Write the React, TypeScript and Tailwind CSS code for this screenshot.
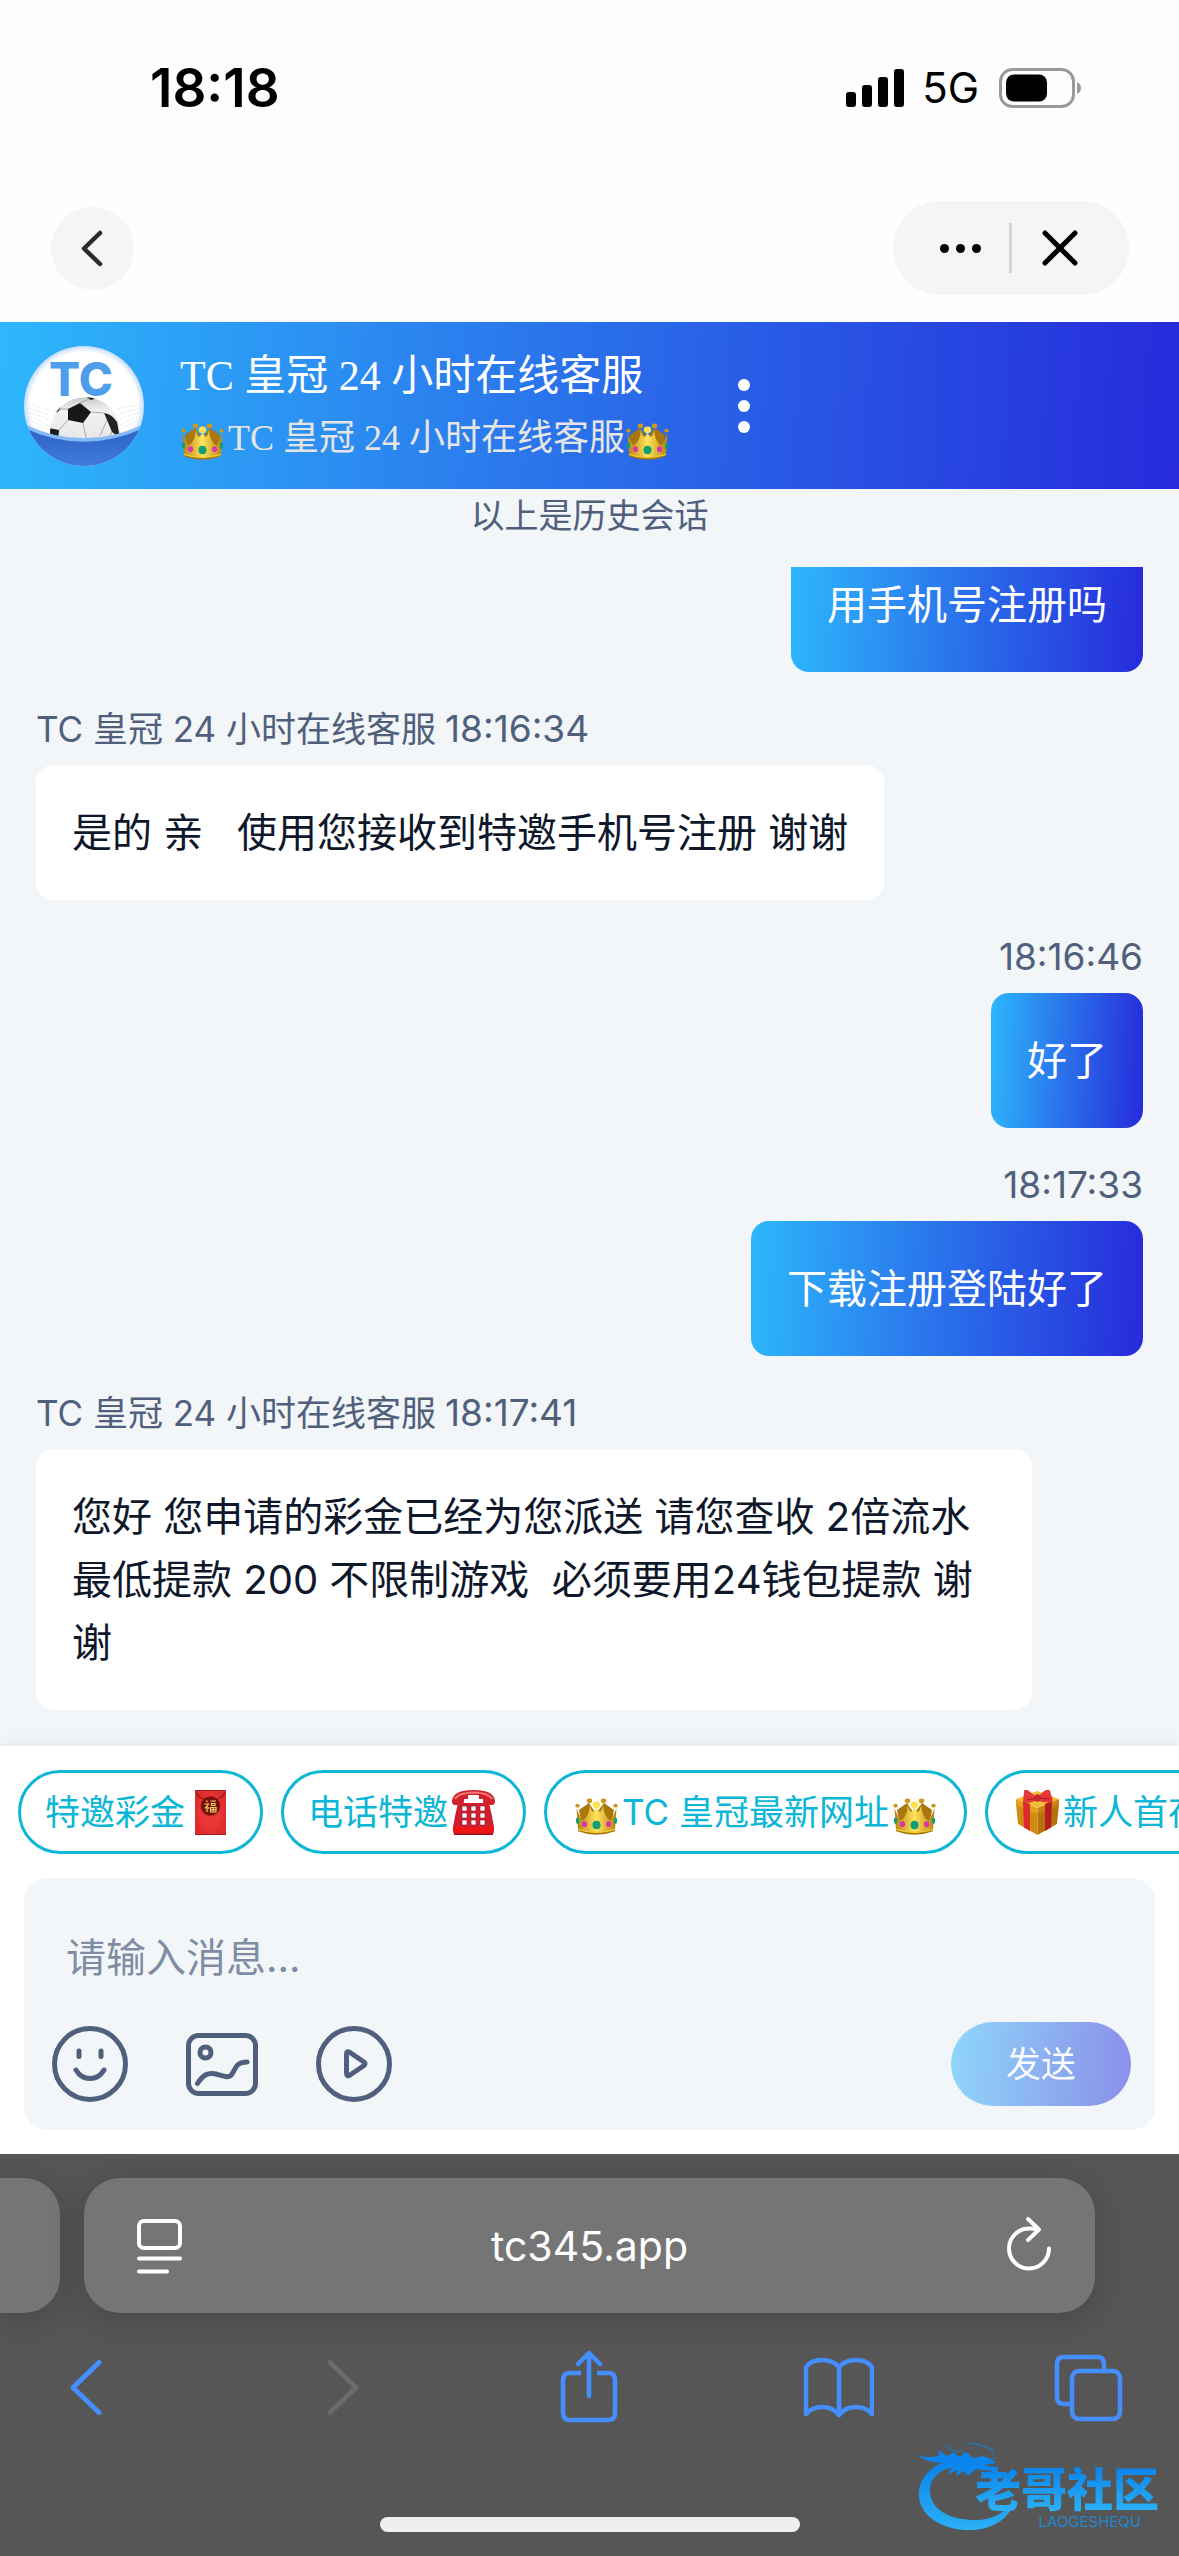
import React from "react";

const GRADIENT =
  "bg-[linear-gradient(93deg,#2db7fc_0%,#2a6fea_50%,#262bdb_100%)]";

function Crown({ className = "" }: { className?: string }) {
  return (
    <svg viewBox="0 0 45 45" className={className} aria-label="👑" role="img">
      <defs>
        <linearGradient id="crownGold" x1="0" y1="0" x2="1" y2="0">
          <stop offset="0" stopColor="#b9820f" />
          <stop offset="0.5" stopColor="#ffe35a" />
          <stop offset="1" stopColor="#b9820f" />
        </linearGradient>
      </defs>
      <g transform="translate(0 6) scale(1 0.88)">
        <path d="M5 16 L15 8 L22 20 L30 8 L40 16 L37 34 H8Z" fill="#a9780c" />
        <path d="M2.500 14 L8 28 Q15 25 16 10 Q18 24 22.500 13 Q27 24 29 10 Q30 25 37 28 L42.500 14 L41 39 Q22.500 47 4 39Z" fill="url(#crownGold)" />
        <path d="M4 37 Q22.500 46 41 37 L41 40 Q22.500 48 4 40Z" fill="#a87708" />
        <path d="M4 38 Q22.500 45 41 38" fill="none" stroke="#f1cb3d" strokeWidth="1.500" />
        <circle cx="15.500" cy="5.500" r="2.800" fill="#cf9a1c" />
        <circle cx="29.500" cy="5.500" r="2.800" fill="#cf9a1c" />
        <circle cx="22.500" cy="10" r="3.800" fill="#ffe14d" />
        <circle cx="3.500" cy="11" r="2.200" fill="#c9951a" />
        <circle cx="41.500" cy="11" r="2.200" fill="#c9951a" />
        <ellipse cx="22.500" cy="33" rx="4" ry="4.800" fill="#0f9f74" />
        <ellipse cx="10.500" cy="32" rx="2.600" ry="3.200" fill="#d637b0" />
        <ellipse cx="34.500" cy="32" rx="2.600" ry="3.200" fill="#d637b0" />
        <ellipse cx="3.500" cy="28" rx="1.600" ry="3.500" fill="#0f9f74" />
        <ellipse cx="41.500" cy="28" rx="1.600" ry="3.500" fill="#0f9f74" />
      </g>
    </svg>
  );
}

function Envelope({ className = "" }: { className?: string }) {
  return (
    <svg viewBox="0 0 45 45" className={className} aria-label="🧧" role="img">
      <defs>
        <radialGradient id="envelopeRed">
          <stop offset="0" stopColor="#e33a33" />
          <stop offset="0.600" stopColor="#ee3737" />
          <stop offset="1" stopColor="#dc2c2c" />
        </radialGradient>
      </defs>
      <rect x="7" width="31" height="45" fill="url(#envelopeRed)" />
      <path d="M7 0.500H38M7 44.500H38" stroke="#9c2019" />
      <path d="M8 2 Q10 9 22.500 11 Q35 9 37 2" fill="none" stroke="#9c1b16" strokeWidth="1.200" />
      <circle cx="22.500" cy="16" r="9.800" fill="#7d120d" />
      <path d="M18.500 10.500 L19.500 12 M16.500 14 H20.500 L17 18.500 M19 16 V22 M20 17.500 L21 18.500 M22.500 11 H28 M23.500 13.500 H27 V15.500 H23.500Z M22.500 17.500 H28 V22 H22.500Z M25.200 17.500 V22 M22.500 19.700 H28" fill="none" stroke="#f3cf63" strokeWidth="1.200" />
    </svg>
  );
}

function Phone({ className = "" }: { className?: string }) {
  return (
    <svg viewBox="0 0 45 45" className={className} aria-label="☎️" role="img">
      <path d="M3 42 H42 V45 H3Z" fill="#8c1620" />
      <path d="M7 13 Q4 25 2 37 V41 Q2 43 4 43 H41 Q43 43 43 41 V37 Q41 25 38 13Z" fill="#cf1e2d" />
      <path d="M2 37 H43 V41 Q43 43.500 41 43.500 H4 Q2 43.500 2 41Z" fill="#ee1515" />
      <path d="M1 11 Q2 0 22.500 0 Q43 0 44 11 Q44 15 41 15 H34 Q32 15 32 9 H13 Q13 15 11 15 H4 Q1 15 1 11Z" fill="#d0202c" />
      <path d="M4 9 Q7 3 22.500 2.500 Q38 3 41 9" fill="none" stroke="#f5786f" strokeWidth="2" />
      <rect x="17" y="5" width="11" height="5" rx="1" fill="#fff" />
      {[16, 23, 30].map((y) =>
        [11, 20, 29].map((x) => (
          <rect key={`${x}-${y}`} x={x} y={y} width="5" height="5" rx="1" fill="#f4f4f4" stroke="#8e1320" strokeWidth="0.500" />
        ))
      )}
    </svg>
  );
}

function Gift({ className = "" }: { className?: string }) {
  return (
    <svg viewBox="0 0 45 45" className={className} aria-label="🎁" role="img">
      <path d="M1 14 L22.500 22 V45 L3 34Z" fill="#d28a10" />
      <path d="M44 14 L22.500 22 V45 L42 34Z" fill="#b8720a" />
      <path d="M1 9 L22.500 1 L44 9 L22.500 18Z" fill="#f4bd32" />
      <path d="M1 9 L22.500 18 V24 L1 15Z" fill="#e2a21b" />
      <path d="M44 9 L22.500 18 V24 L44 15Z" fill="#c9850f" />
      <path d="M8 11 L15 14 V41 L9 37.500Z" fill="#d92b2b" />
      <path d="M37 11 L30 14 V41 L36 37.500Z" fill="#b61d22" />
      <path d="M22 8 Q9 -5 9 2 L8 12 Q15 14 22 10 Q30 14 38 11 L35 1 Q33 -4 24 6Z" fill="#e5383b" />
      <path d="M22 8 L12 10 M23 8 L34 9" stroke="#a61b20" strokeWidth="1.200" />
      <ellipse cx="22.500" cy="8" rx="3.500" ry="3.800" fill="#c92a2d" />
    </svg>
  );
}

function Avatar() {
  return (
    <svg viewBox="0 0 120 120" className="size-[120px] shrink-0" role="img" aria-label="TC">
      <defs>
        <clipPath id="avatarClip"><circle cx="60" cy="60" r="60" /></clipPath>
        <clipPath id="ballClip"><circle cx="61" cy="86" r="35" /></clipPath>
        <radialGradient id="avatarBg">
          <stop offset="0.900" stopColor="#fff" />
          <stop offset="1" stopColor="#c6dcf8" />
        </radialGradient>
        <linearGradient id="ballShade" x1="0" y1="0" x2="0" y2="1">
          <stop offset="0" stopColor="#c9c9c9" />
          <stop offset="0.200" stopColor="#f2f2f2" />
          <stop offset="1" stopColor="#dcdcdc" />
        </linearGradient>
        <linearGradient id="seaBlue" x1="0" y1="0" x2="0" y2="1">
          <stop offset="0" stopColor="#2d62c4" />
          <stop offset="1" stopColor="#3f7bdc" />
        </linearGradient>
      </defs>
      <g clipPath="url(#avatarClip)">
        <rect width="120" height="120" fill="url(#avatarBg)" />
        <g stroke="#c3d5dd" strokeWidth="1" strokeDasharray="1 2" fill="none">
          <path d="M0 58 Q16 60 30 66M0 62 Q16 64 28 71M0 66 Q16 68 27 76M1 70 Q16 73 26 81M2 74 Q16 77 26 86M3 79 Q14 81 24 89" />
          <path d="M120 58 Q104 60 90 64M120 62 Q106 64 93 69M120 66 Q106 68 95 74M119 70 Q106 73 96 79M118 74 Q106 77 96 84M117 79 Q108 81 96 88" />
        </g>
        <text x="57" y="50" textAnchor="middle" className="fill-[#4e9eec] font-['Inter'] text-[46px] font-extrabold">TC</text>
        <g clipPath="url(#ballClip)">
          <circle cx="61" cy="86" r="35" fill="url(#ballShade)" />
          <path d="M44 63 L56 57 L67 66 L59 77 L44 74Z" fill="#171717" />
          <path d="M80 67 Q88 68 93 76 L96 92 L88 86 L83 74Z" fill="#222" />
          <path d="M29 68 L38 56 L35 65Z M24 82 L35 84 L34 96 H24Z M61 50 L73 52 L67 54Z" fill="#1c1c1c" />
          <path d="M56 57 L65 53 M67 66 L80 67 M59 77 L63 96 M44 74 L35 84 M44 63 L36 63 M83 74 L76 90 M88 86 L82 96" fill="none" stroke="#a9a9a9" strokeWidth="1" />
        </g>
        <path d="M0 80 Q60 108 120 80 V120 H0Z" fill="url(#seaBlue)" />
        <path d="M0 80 Q60 108 120 80" fill="none" stroke="#86b9f7" strokeWidth="3.500" />
      </g>
    </svg>
  );
}

function StatusBar() {
  return (
    <div className="flex h-[176px] items-center justify-between bg-[#fdfdfd] pr-[97px] pl-[150px] text-black">
      <span className="text-[53px] leading-[60px] font-semibold">18:18</span>
      <div className="flex items-center">
        <svg viewBox="0 0 58 38" className="mr-[18px] h-[38px] w-[58px]" aria-label="信号" role="img">
          <rect x="0" y="23" width="10" height="15" rx="3" />
          <rect x="16" y="16" width="10" height="22" rx="3" />
          <rect x="32" y="8" width="10" height="30" rx="3" />
          <rect x="48" y="0" width="10" height="38" rx="3" />
        </svg>
        <span className="mr-[20px] text-[42px] leading-[48px]">5G</span>
        <svg viewBox="0 0 83 40" className="h-[40px] w-[83px]" aria-label="电量" role="img">
          <rect x="1.500" y="1.500" width="73" height="37" rx="12" fill="none" stroke="#999" strokeWidth="3" />
          <rect x="7" y="6.500" width="41" height="27" rx="8" />
          <path d="M78 14 Q82 16 82 20 Q82 24 78 26Z" fill="#999" />
        </svg>
      </div>
    </div>
  );
}

function NavBar() {
  return (
    <nav className="flex h-[146px] items-center justify-between bg-[#fefefe] pr-[50px] pb-[2px] pl-[51px]">
      <button aria-label="返回" className="flex size-[83px] items-center justify-center rounded-full bg-[#f5f5f5]">
        <svg viewBox="0 0 83 83" className="size-[83px]" fill="none" stroke="#2b2b2b" strokeWidth="4.500" strokeLinecap="round" strokeLinejoin="round">
          <path d="M49 26 L33 41.500 L49 57" />
        </svg>
      </button>
      <div className="flex h-[94px] w-[236px] items-center rounded-full bg-[#f5f5f5]">
        <button aria-label="更多" className="flex h-full w-[116px] items-center justify-end gap-[7px] pr-[28px]">
          <span className="size-[9px] rounded-full bg-black" />
          <span className="size-[9px] rounded-full bg-black" />
          <span className="size-[9px] rounded-full bg-black" />
        </button>
        <span className="h-[50px] w-[3px] bg-[#d4d4d4]" />
        <button aria-label="关闭" className="flex h-full flex-1 items-center pl-[28px]">
          <svg viewBox="0 0 40 40" className="size-[40px]" stroke="#000" strokeWidth="5" strokeLinecap="round">
            <path d="M5 5 L35 35 M35 5 L5 35" />
          </svg>
        </button>
      </div>
    </nav>
  );
}

function ChatHeader() {
  return (
    <header className={`${GRADIENT} flex h-[167px] items-center px-6 font-['Liberation_Serif','Noto_Sans_CJK_SC',serif] text-white`}>
      <Avatar />
      <div className="ml-9 flex flex-col">
        <h1 className="text-[42px] leading-[64px]">TC 皇冠 24 小时在线客服</h1>
        <p className="flex items-center text-[36px] leading-[60px] text-[#e5e5e5]">
          <Crown className="mr-[3px] size-[45px]" />
          TC 皇冠 24 小时在线客服
          <Crown className="size-[45px]" />
        </p>
      </div>
      <button aria-label="菜单" className="ml-[56px] flex w-[36px] flex-col items-center gap-[9px]">
        <span className="size-[12px] rounded-full bg-white" />
        <span className="size-[12px] rounded-full bg-white" />
        <span className="size-[12px] rounded-full bg-white" />
      </button>
    </header>
  );
}

type MessageProps = { sender?: string; time: string; text: string };

function Message({ sender, time, text }: MessageProps) {
  return (
    <article className={`mt-[33px] flex flex-col ${sender ? "items-start" : "items-end"}`}>
      <p className="mb-3 flex items-center gap-[9px] text-[#50607c]">
        {sender && <span className="text-[35px] leading-[48px]">{sender}</span>}
        <time className="text-[37px] leading-[48px]">{time}</time>
      </p>
      <div
        className={`max-w-[90%] rounded-[18px] p-9 text-[40px] leading-[63px] whitespace-pre-wrap ${
          sender ? "bg-white text-[#0f172a]" : `${GRADIENT} text-white`
        }`}
      >
        {text}
      </div>
    </article>
  );
}

function Chip({ children }: { children: React.ReactNode }) {
  return (
    <button className="flex h-[84px] shrink-0 items-center rounded-full border-3 border-[#0bb6d6] px-6 text-[35px] whitespace-nowrap text-[#0bb6d6]">
      {children}
    </button>
  );
}

function Composer() {
  return (
    <form className="mx-6 mt-6 flex flex-col rounded-3xl bg-[#f2f6f9] px-6 pt-12 pb-6" onSubmit={(e) => e.preventDefault()}>
      <input
        aria-label="消息"
        placeholder="请输入消息..."
        className="mx-[18px] h-[63px] bg-transparent text-[40px] text-[#0f172a] outline-none placeholder:text-[#7f8ca3]"
      />
      <div className="mt-[33px] flex items-center justify-between">
        <div className="flex gap-12 text-[#50607c]">
          <button type="button" aria-label="表情" className="size-[84px]">
            <svg viewBox="0 0 84 84" fill="none" stroke="currentColor" strokeWidth="5" strokeLinecap="round">
              <circle cx="42" cy="42" r="35.500" />
              <path d="M31 29 V34.500 M53 29 V34.500" />
              <path d="M28 48 Q33 56.500 42 56.500 Q51 56.500 56 48" />
            </svg>
          </button>
          <button type="button" aria-label="图片" className="size-[84px]">
            <svg viewBox="0 0 84 84" fill="none" stroke="currentColor" strokeWidth="5" strokeLinecap="round">
              <rect x="8.500" y="13.500" width="67" height="58" rx="10" />
              <circle cx="25.500" cy="30.500" r="5.500" />
              <path d="M17.500 61.500 C23 53 28 50 36 52 C43 54 49 57 52 52 C56 46 56 40 67 40" />
            </svg>
          </button>
          <button type="button" aria-label="视频" className="size-[84px]">
            <svg viewBox="0 0 84 84" fill="none" stroke="currentColor" strokeWidth="5" strokeLinejoin="round">
              <circle cx="42" cy="42" r="35.500" />
              <path d="M34.500 32 Q34.500 28.500 38 30.500 L52 40 Q54 41.500 52 43.500 L38 53 Q34.500 55 34.500 51Z" />
            </svg>
          </button>
        </div>
        <button type="submit" className={`${GRADIENT} h-[84px] w-[180px] rounded-full text-[35px] text-white opacity-50`}>
          发送
        </button>
      </div>
    </form>
  );
}

function Watermark() {
  return (
    <div className="absolute right-[18px] bottom-[24px] h-[92px] w-[245px]">
      <svg viewBox="0 0 245 92" className="absolute inset-0" aria-hidden="true">
        <defs>
          <linearGradient id="dragonBlue" x1="0" y1="0" x2="0" y2="1">
            <stop offset="0" stopColor="#0b80e8" />
            <stop offset="1" stopColor="#2ab0f6" />
          </linearGradient>
        </defs>
        <path d="M42 19 C16 22 2 38 3 56 C4 77 28 91 56 90 C78 89 94 78 99 60 C89 73 76 80 60 80 C34 80 15 70 14 52 C13 39 24 28 41 27Z" fill="url(#dragonBlue)" />
        <path d="M0 14 Q9 19 23 16 L22 10 L31 16 L38 12 L43 17 L50 12 L57 18 L67 16 L75 19 L80 23 L68 25 L78 27 L73 31 L60 29 L52 36 L48 31 L40 36 L42 30 L32 34 L36 27 L27 29 L31 23 Q12 24 0 14Z" fill="#0b86ee" />
        <path d="M29 6 Q36 12 47 11 M50 3 Q66 4 75 9 Q79 13 78 19" fill="none" stroke="#2876ab" strokeWidth="1.500" />
      </svg>
      <div className="absolute top-[26px] right-[2px] bg-linear-to-b from-[#0b82ea] to-[#2cb2f6] bg-clip-text text-[46px] leading-[46px] font-black text-transparent">
        老哥社区
      </div>
      <div className="absolute top-[74px] right-[20px] text-[15px] leading-[16px] text-[#2387cc]">LAOGESHEQU</div>
    </div>
  );
}

function BrowserChrome() {
  return (
    <footer className="relative flex flex-col overflow-hidden bg-[#565656] pt-6 pb-6">
      <div className="flex h-[135px] gap-6 pr-[84px]">
        <div className="w-[60px] rounded-r-[36px] bg-[#757575] shadow-[0_6px_36px_rgba(0,0,0,0.18)]" />
        <div className="flex flex-1 items-center justify-between rounded-[36px] bg-[#757575] px-[44px] text-white shadow-[0_6px_36px_rgba(0,0,0,0.18)]">
          <button aria-label="页面菜单" className="size-[60px]">
            <svg viewBox="0 0 60 60" fill="none" stroke="currentColor" strokeWidth="4" strokeLinecap="round">
              <rect x="11" y="5" width="41" height="27" rx="5" />
              <path d="M11 42.500 H52 M11 55.500 H39" />
            </svg>
          </button>
          <a href="#top" className="text-[41px] leading-[54px]">tc345.app</a>
          <button aria-label="刷新" className="size-[60px]">
            <svg viewBox="0 0 60 60" fill="none" stroke="currentColor" strokeWidth="4" strokeLinecap="round" strokeLinejoin="round">
              <path d="M47 13.500 Q43 12.500 38 12.500 A20 20 0 1 0 58 32.500" />
              <path d="M37 3 L48 13.500 L37 24" />
            </svg>
          </button>
        </div>
      </div>
      <div className="mt-[38px] flex items-center justify-between pr-[54px] pl-[50px] text-[#448eff]">
        <button aria-label="后退" className="size-[72px]">
          <svg viewBox="0 0 72 72" fill="none" stroke="currentColor" strokeWidth="5" strokeLinecap="round" strokeLinejoin="round">
            <path d="M49 11.500 L23 36.500 L49 61.500" />
          </svg>
        </button>
        <button aria-label="前进" disabled className="size-[72px] text-[#6b6b6b]">
          <svg viewBox="0 0 72 72" fill="none" stroke="currentColor" strokeWidth="5" strokeLinecap="round" strokeLinejoin="round">
            <path d="M29 11.500 L55 36.500 L29 61.500" />
          </svg>
        </button>
        <button aria-label="分享" className="size-[72px]">
          <svg viewBox="0 0 72 72" fill="none" stroke="currentColor" strokeWidth="4.500" strokeLinejoin="round">
            <path d="M29 22 H18 Q11 22 11 29 V62 Q11 69 18 69 H56 Q63 69 63 62 V29 Q63 22 56 22 H45" />
            <path d="M37 45 V3 M26 13 L37 2 L48 13" strokeLinecap="round" />
          </svg>
        </button>
        <button aria-label="书签" className="size-[72px]">
          <svg viewBox="0 0 72 72" fill="none" stroke="currentColor" strokeWidth="4.500" strokeLinecap="round" strokeLinejoin="round">
            <path d="M37 16 Q31 9 20 9 Q9 9 4 16 V63 Q10 56 20 56 Q31 56 37 64 Q43 56 54 56 Q64 56 70 63 V16 Q65 9 54 9 Q43 9 37 16 V64" />
          </svg>
        </button>
        <button aria-label="标签页" className="size-[72px]">
          <svg viewBox="0 0 72 72" fill="none" stroke="currentColor" strokeWidth="4.500">
            <path d="M51 20 V13 Q51 6 44 6 H11 Q4 6 4 13 V46 Q4 53 11 53 H18" />
            <rect x="19" y="20" width="48" height="48" rx="7" />
          </svg>
        </button>
      </div>
      <div className="mt-[94px] h-[15px] w-[420px] self-center rounded-full bg-[#efefef]" />
      <Watermark />
    </footer>
  );
}

export default function App() {
  return (
    <div className="flex min-h-screen flex-col overflow-hidden bg-white font-['Inter','Noto_Sans_CJK_SC',sans-serif]">
      <StatusBar />
      <NavBar />
      <ChatHeader />
      <main className="flex-1 bg-[#f2f6f9] px-9 pb-9">
        <p className="h-[78px] pt-[3px] text-center text-[34px] leading-[48px] text-[#50607c]">以上是历史会话</p>
        <div className="flex justify-end">
          <div className={`${GRADIENT} rounded-b-[18px] px-9 pt-[6px] pb-9 text-[40px] leading-[63px] text-white`}>
            用手机号注册吗
          </div>
        </div>
        <Message sender="TC 皇冠 24 小时在线客服" time="18:16:34" text="是的 亲   使用您接收到特邀手机号注册 谢谢" />
        <Message time="18:16:46" text="好了" />
        <Message time="18:17:33" text="下载注册登陆好了" />
        <Message
          sender="TC 皇冠 24 小时在线客服"
          time="18:17:41"
          text="您好 您申请的彩金已经为您派送 请您查收 2倍流水最低提款 200 不限制游戏  必须要用24钱包提款 谢谢"
        />
      </main>
      <section className="relative bg-white py-6 shadow-[0_-3px_18px_rgba(0,0,0,0.06)]">
        <div className="flex gap-[18px] overflow-hidden pl-[18px]">
          <Chip>特邀彩金<Envelope className="mx-[3px] size-[45px]" /></Chip>
          <Chip>电话特邀<Phone className="mx-[3px] size-[45px]" /></Chip>
          <Chip><Crown className="mx-[3px] size-[45px]" />TC 皇冠最新网址<Crown className="mx-[3px] size-[45px]" /></Chip>
          <Chip><Gift className="mx-[3px] size-[45px]" />新人首存</Chip>
        </div>
        <Composer />
      </section>
      <BrowserChrome />
    </div>
  );
}
